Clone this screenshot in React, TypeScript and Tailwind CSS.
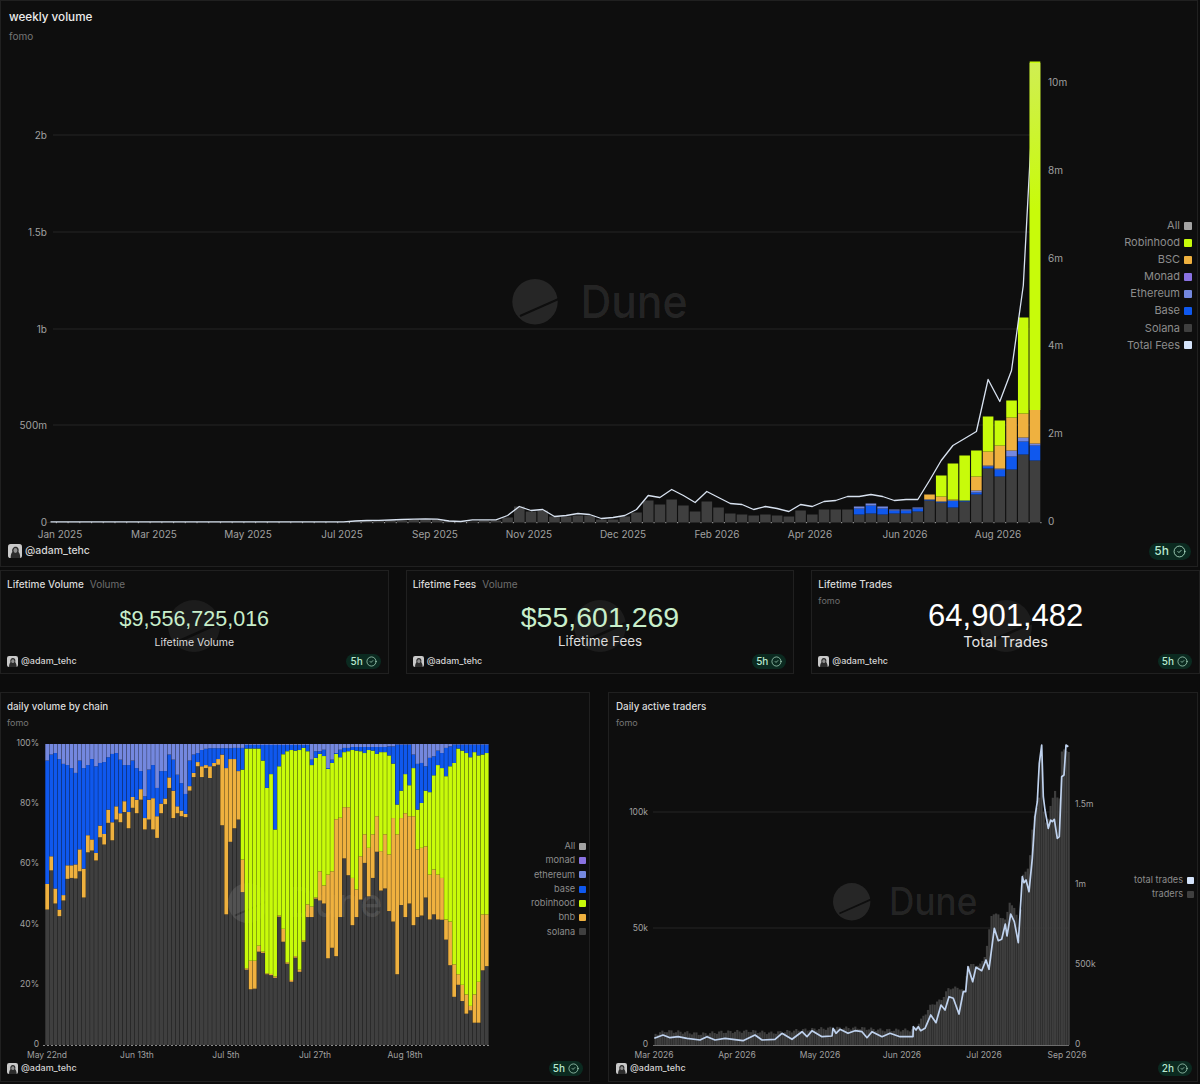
import React from 'react';
import { CircleCheck } from 'lucide-react';

const SOL = '#3f3f3f';
const BASE = '#0f58ee';
const ETH = '#7488df';
const BSC = '#efb13f';
const RH = '#c8fb0a';
const GRID = '#252525';

// weekly bars, heights in px: solana, base, ethereum, bsc, robinhood
const weekly: number[][] = [
  ...Array.from({ length: 26 }, () => [0.4, 0, 0, 0, 0]),
  ...[1, 2, 2, 2, 2, 3, 3, 3, 2, 1, 1, 2, 2, 5].map((h) => [h, 0, 0, 0, 0]),
  ...[16, 11, 12, 6, 6, 7, 7, 3, 3, 6, 10, 22, 18, 23, 17, 11, 21, 15, 9, 8, 7, 8, 7, 6, 12, 8, 13, 13, 13].map((h) => [h, 0, 0, 0, 0]),
  [8, 6, 2, 0, 0],
  [9, 8, 2, 0, 0],
  [8, 6, 2, 0, 0],
  [9, 3, 1, 0, 0],
  [9, 3, 1, 0, 0],
  [11, 3, 1, 0, 0],
  [22, 1, 0, 5, 0],
  [20, 1, 0, 5, 21],
  [15, 7, 0, 1, 36],
  [21, 1, 0, 0, 45],
  [28, 2, 2, 14, 26],
  [54, 2, 1, 14, 35],
  [46, 7, 1, 23, 25],
  [53, 13, 6, 33, 17],
  [68, 13, 4, 24, 96],
  [62, 15, 2, 35, 347],
];

// total fees line, px above the baseline for each week
const fees: number[] = [
  ...Array.from({ length: 26 }, () => 0.7),
  1.5, 2, 2.2, 2.5, 3, 3.3, 3.5, 3.3, 1.5, 1, 2.7, 2.7, 2.7, 7,
  16, 12, 13, 6, 7, 9, 8, 4, 5, 7, 13, 27, 25, 33, 27, 20, 31, 25, 19, 18, 13, 16, 14, 11, 18, 16, 21, 22, 26, 26, 28, 26, 22, 23, 23,
  42, 62, 77, 84, 91, 143, 121, 152, 237, 456,
];

// daily share: solana top, bnb top, robinhood top, base top (in %)
const daily: number[][] = [
  [45, 53.5, 53.5, 94.5], [58, 62.7, 62.7, 96.5], [47, 52, 52, 97], [42.8, 45, 45, 95], [48, 49.8, 49.8, 93.4],
  [55.2, 59.7, 59.7, 93], [55.5, 59.7, 59.7, 92], [55.3, 60, 60, 90.4], [57.7, 65, 65, 94.5], [49, 58.6, 58.6, 92],
  [64, 69.7, 69.7, 93], [64.6, 68.3, 68.3, 95], [61.3, 63.8, 63.8, 92.6], [69, 72.9, 72.9, 93.7], [66.6, 70.1, 70.1, 94],
  [73.8, 78.2, 78.2, 95.6], [68, 74, 74, 96.7], [74.9, 79.3, 79.3, 97], [74, 77, 77, 94.8], [77.4, 81, 81, 93],
  [72, 77.4, 77.4, 93], [78.8, 82.4, 82.4, 94.5], [77, 81.5, 81.5, 92], [81.5, 85, 85, 91], [71.6, 75.4, 75.4, 82.6],
  [74.9, 81.5, 81.5, 91.5], [71.6, 82, 82, 93], [68.8, 76, 76, 85.4], [77, 80.2, 80.2, 91], [80, 81.9, 81.9, 91],
  [85.4, 88.9, 88.9, 96.5], [75.4, 84.5, 84.5, 94.8], [77, 79.3, 79.3, 89.8], [76, 77.9, 77.9, 87], [75.7, 76.8, 76.8, 83.4],
  [84.5, 86, 86, 94.5], [89, 90.4, 90.4, 96.5], [92.6, 94, 94, 97], [89, 92.6, 92.6, 98], [92, 93, 93, 98.4],
  [88.7, 92.6, 92.6, 98.6], [92.6, 93.7, 93.7, 98.6], [93.1, 95, 95, 98.6], [73, 96.5, 96.5, 98.6], [43.4, 92, 92, 98.6],
  [67.5, 95, 95, 98.6], [72, 95, 95, 98.7], [74.9, 91, 91, 98.7], [50.8, 61.6, 91.5, 98.7], [25, 25.5, 98.5, 99.7],
  [18.5, 28, 98.5, 99.7], [18.7, 28, 98.5, 99.7], [31, 33, 98.5, 99.7], [30.6, 31, 94.5, 99.7], [23.5, 23.8, 85.4, 99.7],
  [23.2, 23.6, 90, 99.7], [22.3, 22.8, 71.6, 99.7], [42.6, 43, 92.6, 99.7], [34.3, 38.6, 96.6, 99.7], [27, 27.5, 97.6, 99.7],
  [21, 21.6, 98, 99.7], [29, 29.5, 97.8, 99.7], [24.3, 25, 98, 99.7], [34.3, 34.8, 98.7, 99.7], [42.5, 46.7, 97.6, 99.7],
  [42.5, 46, 93, 94.8], [48.6, 49, 95.4, 97.6], [48, 57.7, 96.7, 97.6], [47, 53, 96, 98.1], [28.8, 56.6, 91.7, 92],
  [32.3, 57.7, 93.7, 94.8], [29.5, 75, 96.7, 97], [42.5, 75.5, 95.6, 98.1], [62, 79, 97.3, 98.7], [56.4, 79, 97.6, 98.7],
  [39.8, 55.5, 98, 99], [42.5, 51.7, 97.8, 99], [48.3, 62.7, 97.6, 99], [60.5, 70, 97, 99], [49.4, 65.5, 98, 99],
  [55.5, 70, 97.8, 99], [64.2, 76, 96.7, 99], [51.3, 64.4, 97.3, 99], [52, 70, 97.3, 99], [44.5, 63.3, 96.2, 99.2],
  [41, 75.4, 93.5, 99.2], [23.5, 70, 79.9, 99.8], [46.5, 75.4, 84.5, 99.8], [42.5, 77, 90, 99.8], [47, 76, 86.3, 99.8],
  [39.8, 76, 92, 96.5], [42.5, 65, 78.2, 93.4], [43, 65.5, 80.4, 93.7], [49, 66, 84.5, 92.6], [41.7, 56.6, 84, 95.4],
  [43.4, 58.3, 89.6, 95.9], [41.7, 56.6, 93, 97.8], [41.6, 55.5, 92, 97], [35, 41.7, 89.3, 98.7], [26.5, 41, 92.6, 99.2],
  [16, 26.8, 93.7, 99.8], [20, 23.5, 98.5, 99.8], [14.6, 20, 97.8, 99.8], [10.4, 16.8, 97, 99.8], [11.5, 13, 95.6, 99.8],
  [7.4, 16.8, 97.3, 99.8], [7.4, 21, 96.2, 99.8], [24.8, 43.4, 96.5, 99.8], [26.2, 43.4, 97, 99.8],
];

const tradesLine: number[][] = [
  [654.3, 1038.3], [663, 1035], [670, 1037.7], [678, 1036.7], [687, 1038.3], [700, 1040], [707, 1036.7], [715, 1040], [725, 1038.3],
  [743, 1040.7], [755, 1035], [762, 1040], [775, 1039.3], [782, 1033.3], [792, 1039.3], [802, 1031.7], [807, 1036.7], [812, 1030.7],
  [822, 1036.7], [832, 1036], [833, 1028.3], [836, 1033.3], [840, 1029.3], [848, 1033.3], [855, 1030.7], [862, 1031.7], [867, 1037.7],
  [872, 1031.7], [882, 1036.7], [890, 1033.3], [900, 1036.7], [913, 1036.7], [913.3, 1026.7], [916, 1030], [918.3, 1026.7], [920.7, 1030.7],
  [925, 1028.3], [930.7, 1015], [936, 1022.7], [941, 1005], [945, 1010], [949, 996.7], [953.3, 998.3], [959, 1014], [963.3, 991.7],
  [965.7, 991.7], [968, 966.7], [972.7, 981.7], [976, 967.3], [981.7, 970.7], [986, 960], [989, 969.3], [994.3, 928.3], [998.3, 940.7],
  [1001.7, 939.3], [1005.3, 924], [1007, 936], [1010.7, 914], [1014.3, 921.7], [1018.3, 942.7], [1022.3, 876.7], [1024, 882.7], [1026, 880],
  [1029, 891.7], [1032.3, 858.3], [1035, 816.7], [1037.3, 801.7], [1039.3, 763.3], [1041.7, 745], [1043.3, 796.7], [1045, 810], [1048.3, 828.3],
  [1050.7, 820], [1052.3, 821.7], [1054.3, 819.3], [1057.3, 838.3], [1059.3, 836.7], [1061.7, 776.7], [1064, 775], [1066, 745], [1068.3, 746.7],
];

const tradersTop: number[][] = [
  [654, 1034], [665, 1031], [680, 1032], [700, 1034], [720, 1032], [750, 1031], [770, 1033], [800, 1030], [830, 1028], [860, 1028],
  [880, 1030], [912, 1030], [920, 1020], [930, 1005], [940, 1000], [948, 988], [960, 988], [963, 993], [967, 965], [980, 965], [985, 952],
  [991, 912], [1005, 920], [1008, 902], [1015, 910], [1018, 943], [1022, 875], [1028, 867], [1032, 822], [1038, 800], [1041, 745],
  [1043, 825], [1047, 820], [1050, 803], [1055, 788], [1058, 810], [1061, 748], [1067, 752], [1069, 752],
];

const lerp = (pts: number[][], x: number) => {
  for (let i = 1; i < pts.length; i++) {
    if (x <= pts[i][0]) {
      const [x0, y0] = pts[i - 1];
      const [x1, y1] = pts[i];
      return y0 + ((y1 - y0) * (x - x0)) / (x1 - x0 || 1);
    }
  }
  return pts[pts.length - 1][1];
};

const weekX = (i: number) => 50.5 + i * 11.72;
const feesPoints = fees.map((h, i) => `${weekX(i).toFixed(1)},${(522.5 - h).toFixed(1)}`).join(' ');

const Label = ({ x, y, children, anchor = 'start', small }: { x: number; y: number; children: React.ReactNode; anchor?: 'start' | 'middle' | 'end'; small?: boolean }) => (
  <text x={x} y={y} textAnchor={anchor} dominantBaseline="central" className={small ? 'fill-[#a0a0a0] text-[8.500px]' : 'fill-[#a0a0a0] text-[10px]'}>
    {children}
  </text>
);

const Watermark = ({ id, cx, cy, r }: { id: string; cx: number; cy: number; r: number }) => (
  <g>
    <mask id={id} maskUnits="userSpaceOnUse" x={cx - r - 1} y={cy - r - 1} width={2 * r + 2} height={2 * r + 2}>
      <rect x={cx - r - 1} y={cy - r - 1} width={2 * r + 2} height={2 * r + 2} fill="#fff" />
      <line x1={cx - 0.66 * r} y1={cy + 0.63 * r} x2={cx + 1.04 * r} y2={cy - 0.12 * r} stroke="#000" strokeWidth={r * 0.1} />
    </mask>
    <circle cx={cx} cy={cy} r={r} fill="#fff" fillOpacity={0.1} mask={`url(#${id})`} />
    <text x={cx + r * 2} y={cy + r * 0.72} textLength={r * 4.72} lengthAdjust="spacingAndGlyphs" fill="#fff" fillOpacity={0.1} fontSize={r * 2.02} fontWeight={500}>
      Dune
    </text>
  </g>
);

const Avatar = ({ size }: { size: number }) => (
  <svg width={size} height={size} viewBox="0 0 16 16" className="shrink-0">
    <rect width="16" height="16" rx="3" fill="#c9c9c9" />
    <path d="M3 16c0-4 1-6 2-7-1-3 1-6 3.500-6S13 5 12 9c1 1 2 3 2 7z" fill="#2c2c2c" />
    <ellipse cx="8.500" cy="7.500" rx="2.200" ry="2.800" fill="#8d8d8d" />
  </svg>
);

const Badge = ({ label, big }: { label: string; big?: boolean }) => (
  <div className={big ? 'flex items-center gap-1 rounded-full bg-[#0b2a20] h-[17px] px-[5px] text-[12px] font-medium text-[#b8e8cf]' : 'flex items-center gap-[3px] rounded-full bg-[#0b2a20] h-[15px] px-[4px] text-[10px] font-medium text-[#b8e8cf]'}>
    {label}
    <CircleCheck size={big ? 13 : 11} strokeWidth={1.5} />
  </div>
);

const Author = ({ big }: { big?: boolean }) => (
  <div className={big ? 'flex items-center gap-[3px] text-[10.500px] font-medium text-[#d4d4d4]' : 'flex items-center gap-[3px] text-[9px] font-medium text-[#d4d4d4]'}>
    <Avatar size={big ? 14 : 11} />
    @adam_tehc
  </div>
);

const Legend = ({ items, big }: { items: [string, string][]; big?: boolean }) => (
  <div className={big ? 'flex flex-col items-end text-[11px] leading-[17.100px] text-[#8c8c8c]' : 'flex flex-col items-end text-[9.200px] leading-[14.300px] text-[#8c8c8c]'}>
    {items.map(([name, color]) => (
      <div key={name} className="flex items-center gap-[4px]">
        {name}
        <span className={big ? 'w-[8px] h-[8px] rounded-[1px]' : 'w-[7px] h-[7px] rounded-[1px]'} style={{ background: color }} />
      </div>
    ))}
  </div>
);

const WeeklyChart = () => (
  <svg width={1100} height={497} viewBox="1 46 1100 497" className="shrink-0">
    <defs>
      <linearGradient id="lastBar" x1="0" y1="63" x2="0" y2="210" gradientUnits="userSpaceOnUse">
        <stop offset="0" stopColor="#d0ee52" />
        <stop offset="1" stopColor={RH} />
      </linearGradient>
    </defs>
    {[135, 232, 329, 425].map((y) => (
      <line key={y} x1={53} x2={1030} y1={y} y2={y} stroke={GRID} />
    ))}
    {weekly.map((row, i) => {
      const colors = [SOL, BASE, ETH, BSC, RH];
      let y = 522.5;
      return (
        <g key={i}>
          {row.map((h, k) => {
            y -= h;
            return h > 0 ? <rect key={k} x={weekX(i) - 5.3} y={y} width={10.6} height={h} fill={colors[k]} /> : null;
          })}
          <rect x={weekX(i) + 5.3} y={522} width={1.2} height={1.2} fill="#9a9a9a" />
        </g>
      );
    })}
    <polyline points={feesPoints} fill="none" stroke="#d8e2f0" strokeWidth={1.3} strokeLinejoin="round" />
    <rect x={weekX(84) - 5.3} y={63} width={10.6} height={347} fill="url(#lastBar)" />
    <Watermark id="markWeekly" cx={535} cy={301.7} r={22.7} />
    {[
      ['2b', 135],
      ['1.5b', 232],
      ['1b', 329],
      ['500m', 425],
      ['0', 522],
    ].map(([t, y]) => (
      <Label key={t} x={47} y={Number(y)} anchor="end">
        {t}
      </Label>
    ))}
    {[
      ['10m', 82],
      ['8m', 170],
      ['6m', 258],
      ['4m', 345],
      ['2m', 433],
      ['0', 521],
    ].map(([t, y]) => (
      <Label key={t} x={1048} y={Number(y)}>
        {t}
      </Label>
    ))}
    {[
      ['Jan 2025', 60],
      ['Mar 2025', 154],
      ['May 2025', 248],
      ['Jul 2025', 342],
      ['Sep 2025', 435],
      ['Nov 2025', 529],
      ['Dec 2025', 623],
      ['Feb 2026', 717],
      ['Apr 2026', 810],
      ['Jun 2026', 905],
      ['Aug 2026', 998],
    ].map(([t, x]) => (
      <Label key={t} x={Number(x)} y={534} anchor="middle">
        {t}
      </Label>
    ))}
  </svg>
);

const DailyChain = () => {
  const toY = (p: number) => 1045 - p * 3.01;
  const seg = (i: number, from: number, to: number, fill: string) =>
    to > from ? <rect x={45.3 + i * 4.07} y={toY(to)} width={3.75} height={(to - from) * 3.01} fill={fill} /> : null;
  return (
    <svg width={530} height={327} viewBox="1 733 530 327" className="shrink-0">
      {daily.map(([sol], i) => (
        <g key={i}>{seg(i, 0, sol, SOL)}</g>
      ))}
      <Watermark id="markChain" cx={248} cy={903} r={20} />
      {daily.map(([sol, bsc, rh, base], i) => (
        <g key={i}>
          {seg(i, sol, bsc, BSC)}
          {seg(i, bsc, rh, RH)}
          {seg(i, rh, base, BASE)}
          {seg(i, base, 100, ETH)}
        </g>
      ))}
      <line x1={43} x2={489} y1={1045.500} y2={1045.500} stroke="#8a8a8a" strokeDasharray="2 2" />
      {[
        ['100%', 743],
        ['80%', 803],
        ['60%', 863],
        ['40%', 924],
        ['20%', 984],
        ['0', 1044],
      ].map(([t, y]) => (
        <Label key={t} small x={39} y={Number(y)} anchor="end">
          {t}
        </Label>
      ))}
      {[
        ['May 22nd', 47],
        ['Jun 13th', 137],
        ['Jul 5th', 226],
        ['Jul 27th', 315],
        ['Aug 18th', 405],
      ].map(([t, x]) => (
        <Label key={t} small x={Number(x)} y={1055} anchor="middle">
          {t}
        </Label>
      ))}
    </svg>
  );
};

const DailyTraders = () => {
  const days = Array.from({ length: 183 }, (_, i) => 654.5 + i * 2.27);
  return (
    <svg width={520} height={327} viewBox="609 733 520 327" className="shrink-0">
      {[812, 928].map((y) => (
        <line key={y} x1={653} x2={1069} y1={y} y2={y} stroke={GRID} />
      ))}
      {days.map((x, i) => {
        const wobble = x < 1000 ? Math.sin(i * 1.7) * 1.5 : 0;
        const top = lerp(tradersTop, x) + wobble;
        return <rect key={i} x={x} y={top} width={2.15} height={1045 - top} fill="#3e3e3e" />;
      })}
      <line x1={653} x2={1069} y1={1045.500} y2={1045.500} stroke="#6e6e6e" />
      <polyline points={tradesLine.map((p) => p.join(',')).join(' ')} fill="none" stroke="#bfd2ee" strokeWidth={1.7} strokeLinejoin="round" />
      <Watermark id="markTraders" cx={851.7} cy={901.7} r={18.7} />
      {[
        ['100k', 812],
        ['50k', 928],
        ['0', 1044],
      ].map(([t, y]) => (
        <Label key={t} small x={648} y={Number(y)} anchor="end">
          {t}
        </Label>
      ))}
      {[
        ['1.5m', 804],
        ['1m', 884],
        ['500k', 964],
        ['0', 1044],
      ].map(([t, y]) => (
        <Label key={t} small x={1075} y={Number(y)}>
          {t}
        </Label>
      ))}
      {[
        ['Mar 2026', 654],
        ['Apr 2026', 737],
        ['May 2026', 820],
        ['Jun 2026', 902],
        ['Jul 2026', 984],
        ['Sep 2026', 1067],
      ].map(([t, x]) => (
        <Label key={t} small x={Number(x)} y={1055} anchor="middle">
          {t}
        </Label>
      ))}
    </svg>
  );
};

const Stat = ({ title, tag, sub, value, label, valueClass, labelClass }: { title: string; tag?: string; sub?: string; value: string; label: string; valueClass: string; labelClass: string }) => (
  <div className="relative h-[104px] flex flex-col border border-[#202020] bg-[#0e0e0e]">
    <svg width={52} height={52} viewBox="0 0 52 52" className="absolute left-1/2 -translate-x-1/2 top-[29px]">
      <circle cx={26} cy={26} r={26} fill="#1c1c1c" />
      <line x1={9} y1={42} x2={52} y2={23} stroke="#0e0e0e" strokeWidth={2.500} />
    </svg>
    <div className="relative h-[24px] px-[6px] pt-[7px] text-[10px] leading-[13px]">
      <span className="font-medium text-[#d8d8d8]">{title}</span>
      {tag && <span className="ml-[6px] text-[#6f6f6f]">{tag}</span>}
      {sub && <div className="mt-[3px] text-[9px] text-[#6f6f6f]">{sub}</div>}
    </div>
    <div className="relative flex-1 flex flex-col items-center justify-end pb-[3px]">
      <div className={valueClass}>{value}</div>
      <div className={labelClass}>{label}</div>
    </div>
    <div className="relative flex items-center justify-between h-[16px] mb-[4px] pl-[6px] pr-[7px]">
      <Author />
      <Badge label="5h" />
    </div>
  </div>
);

export default function App() {
  return (
    <div className="w-[1200px] h-[1084px] overflow-hidden bg-[#0c0c0c] pr-[2px] [font-family:Inter,sans-serif]">
      <div className="h-[567px] flex flex-col border border-[#202020] bg-[#0e0e0e]">
        <div className="h-[45px] px-[8px] pt-[9px]">
          <div className="text-[11.700px] leading-[15px] font-medium text-[#ececec]">weekly volume</div>
          <div className="mt-[5px] text-[10px] leading-[12px] text-[#767676]">fomo</div>
        </div>
        <div className="flex">
          <WeeklyChart />
          <div className="flex-1 flex justify-end pt-[171px] pr-[5px]">
            <Legend
              big
              items={[
                ['All', '#a3a3a3'],
                ['Robinhood', RH],
                ['BSC', BSC],
                ['Monad', '#8a72e2'],
                ['Ethereum', ETH],
                ['Base', BASE],
                ['Solana', SOL],
                ['Total Fees', '#d5e4fb'],
              ]}
            />
          </div>
        </div>
        <div className="flex items-center justify-between h-[16px] pl-[7px] pr-[6px]">
          <Author big />
          <Badge big label="5h" />
        </div>
      </div>

      <div className="mt-[3px] -mr-[2px] grid grid-cols-3 gap-[17px]">
        <Stat
          title="Lifetime Volume"
          tag="Volume"
          value="$9,556,725,016"
          label="Lifetime Volume"
          valueClass="[font-family:'Liberation_Sans',sans-serif] mb-[3px] text-[21.500px] leading-[27px] text-[#c8eecb]"
          labelClass="text-[10.500px] leading-[14px] text-[#dcdcdc]"
        />
        <Stat
          title="Lifetime Fees"
          tag="Volume"
          value="$55,601,269"
          label="Lifetime Fees"
          valueClass="[font-family:'Liberation_Sans',sans-serif] text-[28.500px] leading-[32px] text-[#c8eecb]"
          labelClass="text-[13.400px] leading-[17px] text-[#dcdcdc]"
        />
        <Stat
          title="Lifetime Trades"
          sub="fomo"
          value="64,901,482"
          label="Total Trades"
          valueClass="[font-family:'Liberation_Sans',sans-serif] text-[31px] leading-[34px] text-white"
          labelClass="text-[14.500px] leading-[17px] text-[#e4e4e4]"
        />
      </div>

      <div className="mt-[18px] grid grid-cols-2 gap-[18px]">
        <div className="h-[390px] flex flex-col border border-[#202020] bg-[#0e0e0e]">
          <div className="h-[40px] px-[6px] pt-[7px]">
            <div className="text-[9.800px] leading-[14px] font-medium text-[#dcdcdc]">daily volume by chain</div>
            <div className="mt-[3px] text-[9px] leading-[11px] text-[#767676]">fomo</div>
          </div>
          <div className="flex">
            <DailyChain />
            <div className="flex-1 flex justify-end pt-[106px] pr-[9px]">
              <Legend
                items={[
                  ['All', '#a3a3a3'],
                  ['monad', '#8a72e2'],
                  ['ethereum', ETH],
                  ['base', BASE],
                  ['robinhood', RH],
                  ['bnb', BSC],
                  ['solana', SOL],
                ]}
              />
            </div>
          </div>
          <div className="flex items-center justify-between h-[16px] pl-[6px] pr-[6px]">
            <Author />
            <Badge label="5h" />
          </div>
        </div>

        <div className="h-[390px] flex flex-col border border-[#202020] bg-[#0e0e0e]">
          <div className="h-[40px] px-[7px] pt-[7px]">
            <div className="text-[9.800px] leading-[14px] font-medium text-[#dcdcdc]">Daily active traders</div>
            <div className="mt-[3px] text-[9px] leading-[11px] text-[#767676]">fomo</div>
          </div>
          <div className="flex">
            <DailyTraders />
            <div className="flex-1 flex justify-end pt-[140px] pr-[3px]">
              <Legend
                items={[
                  ['total trades', '#d5e4fb'],
                  ['traders', SOL],
                ]}
              />
            </div>
          </div>
          <div className="flex items-center justify-between h-[16px] pl-[7px] pr-[5px]">
            <Author />
            <Badge label="2h" />
          </div>
        </div>
      </div>
    </div>
  );
}
